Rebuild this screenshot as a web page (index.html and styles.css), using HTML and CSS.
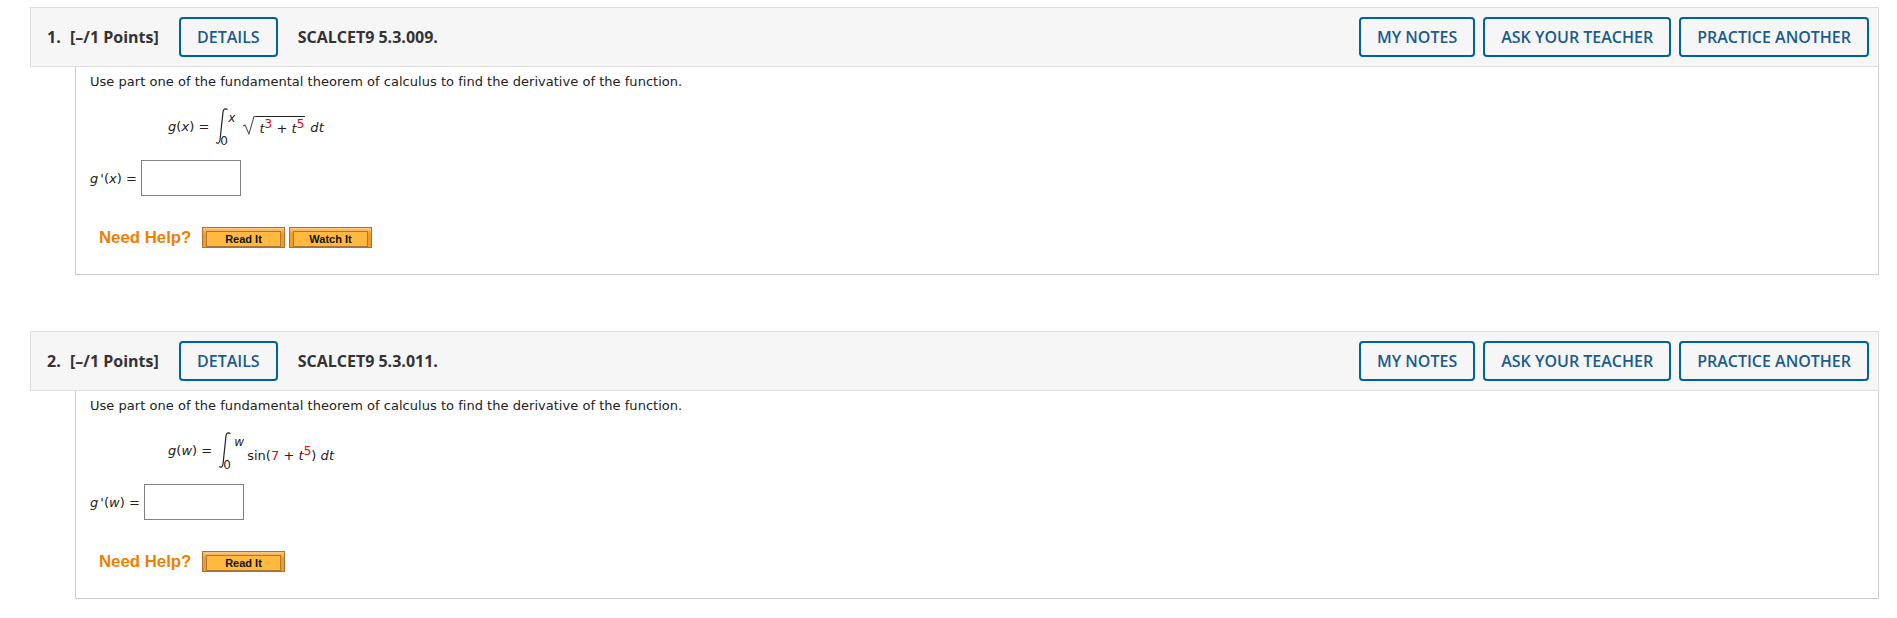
FILE: index.html
```html
<!DOCTYPE html>
<html>
	<head>
		<title>Assignment</title>
		<link rel="stylesheet" href="styles.css">
	</head>
	<body>
		<div class="question">
			<div class="qhead">
				<span class="qnum">1.</span>
				<span class="qpoints">[&ndash;/1 Points]</span>
				<a class="btn details">DETAILS</a>
				<span class="qcode">SCALCET9 5.3.009.</span>
				<a class="btn notes">MY NOTES</a>
				<a class="btn">ASK YOUR TEACHER</a>
				<a class="btn">PRACTICE ANOTHER</a>
			</div>
			<div class="qbody">
				<p class="qtext">Use part one of the fundamental theorem of calculus to find the derivative of the function.</p>
				<div class="formula">
					<span><i>g</i>(<i>x</i>) =</span>
					<span class="integral">
						<svg width="14" height="38" viewBox="0 0 14 38"><path d="M1 35.500c2 1.500 3.500 .5 4-2.500L8 5c.4-3 2-4 4.500-2.500" fill="none" stroke="#222" stroke-width="1.200"/></svg>
						<span class="limits"><i class="upper">x</i><span>0</span></span>
					</span>
					<span class="root">
						<svg width="14" height="19" viewBox="0 0 14 19"><path d="M1 10l2-1 4 9 5-17.500h2" fill="none" stroke="#555" stroke-width="1.100"/></svg>
						<span class="radicand"><i>t</i><sup class="red">3</sup> + <i>t</i><sup class="red">5</sup></span>
					</span>
					<span class="dt"><i>dt</i></span>
				</div>
				<div class="answer">
					<span><i class="prime">g</i>'(<i>x</i>) =</span>
					<input type="text" class="ans">
				</div>
				<div class="help">
					<span class="needhelp">Need Help?</span>
					<a class="helpbtn"><span>Read It</span></a>
					<a class="helpbtn"><span>Watch It</span></a>
				</div>
			</div>
		</div>
		<div class="question">
			<div class="qhead">
				<span class="qnum">2.</span>
				<span class="qpoints">[&ndash;/1 Points]</span>
				<a class="btn details">DETAILS</a>
				<span class="qcode">SCALCET9 5.3.011.</span>
				<a class="btn notes">MY NOTES</a>
				<a class="btn">ASK YOUR TEACHER</a>
				<a class="btn">PRACTICE ANOTHER</a>
			</div>
			<div class="qbody">
				<p class="qtext">Use part one of the fundamental theorem of calculus to find the derivative of the function.</p>
				<div class="formula">
					<span><i>g</i>(<i>w</i>) =</span>
					<span class="integral">
						<svg width="14" height="38" viewBox="0 0 14 38"><path d="M1 35.500c2 1.500 3.500 .5 4-2.500L8 5c.4-3 2-4 4.500-2.500" fill="none" stroke="#222" stroke-width="1.200"/></svg>
						<span class="limits"><i class="upper wide">w</i><span>0</span></span>
					</span>
					<span class="expr">sin(<span class="red">7</span> + <i>t</i><sup class="red">5</sup>) <i>dt</i></span>
				</div>
				<div class="answer">
					<span><i class="prime">g</i>'(<i>w</i>) =</span>
					<input type="text" class="ans">
				</div>
				<div class="help">
					<span class="needhelp">Need Help?</span>
					<a class="helpbtn"><span>Read It</span></a>
				</div>
			</div>
		</div>
	</body>
</html>
```

FILE: styles.css
```css
body {
	margin: 0;
	padding: 7px 18px 0 30px;
	background: #fff;
	font-family: "DejaVu Sans", sans-serif;
	font-size: 13px;
	letter-spacing: .03px;
	color: #222;
}
.question + .question {
	margin-top: 56px;
}
.qhead {
	display: flex;
	align-items: center;
	height: 60px;
	box-sizing: border-box;
	padding: 0 9px 0 16px;
	background: #f6f6f6;
	border: 1px solid #ddd;
	font-family: "Open Sans", sans-serif;
	font-size: 16px;
	font-weight: 600;
	letter-spacing: 0;
	color: #333;
}
.qnum {
	width: 23px;
	font-weight: 700;
}
.qpoints {
	width: 109px;
	font-weight: 700;
}
.qcode {
	margin-left: 20px;
	font-weight: 700;
}
.btn {
	display: block;
	box-sizing: border-box;
	height: 40px;
	line-height: 36px;
	padding: 0 16px;
	margin-left: 8px;
	background: #f6f6f6;
	border: 2px solid #00629b;
	border-radius: 4px;
	color: #1c5a8c;
	white-space: nowrap;
}
.btn.details {
	margin-left: 0;
}
.btn.notes {
	margin-left: auto;
}
.qbody {
	margin-left: 45px;
	height: 208px;
	box-sizing: border-box;
	padding: 0 14px;
	border: 1px solid #ccc;
	border-top: 0;
}
.qtext {
	margin: 0;
	padding-top: 7px;
	line-height: 16px;
}
.formula {
	display: flex;
	align-items: center;
	height: 52px;
	margin-top: 10px;
	padding-left: 78px;
}
.integral {
	display: flex;
	align-items: center;
	margin-left: 6px;
}
.limits {
	display: flex;
	flex-direction: column;
	justify-content: space-between;
	height: 35px;
	padding-top: 6px;
	margin-left: -9px;
	font-size: 12px;
	line-height: 12px;
}
.upper {
	padding-left: 8px;
}
.upper.wide {
	padding-left: 11px;
}
.root {
	display: flex;
	align-self: flex-start;
	margin: 16px 0 0 7px;
}
.radicand {
	height: 22px;
	box-sizing: border-box;
	padding: 2px 1px 0 3px;
	border-top: 1px solid #222;
	line-height: 20px;
}
.dt {
	margin-left: 5px;
	padding-top: 3px;
}
.expr {
	margin-left: 3px;
	padding-top: 10px;
}
sup {
	font-size: 12px;
	line-height: 0;
	vertical-align: 5px;
}
.red {
	color: #e8000d;
}
.prime {
	padding-right: 2px;
}
.answer {
	display: flex;
	align-items: center;
	gap: 4px;
	margin-top: 8px;
}
.ans {
	width: 100px;
	height: 36px;
	box-sizing: border-box;
	margin: 0;
	border: 1px solid #808080;
	background: #fff;
}
.help {
	display: flex;
	align-items: center;
	gap: 4px;
	margin-top: 31px;
	padding-left: 9px;
}
.needhelp {
	width: 99px;
	font-family: "Liberation Sans", sans-serif;
	font-size: 16.800px;
	font-weight: bold;
	letter-spacing: 0;
	color: #ee7f00;
}
.helpbtn {
	display: block;
	width: 83px;
	height: 21px;
	box-sizing: border-box;
	padding: 3px 3px 2px;
	border: 1px solid #b07030;
	background: linear-gradient(#fbc98a, #f39a2c 30%, #f39a2c);
}
.helpbtn span {
	display: block;
	height: 14px;
	border: 1px solid #a87838;
	background: #ffb93f;
	font-family: "Liberation Sans", sans-serif;
	font-size: 11px;
	font-weight: bold;
	letter-spacing: 0;
	line-height: 14px;
	text-align: center;
	color: #111;
}
```
